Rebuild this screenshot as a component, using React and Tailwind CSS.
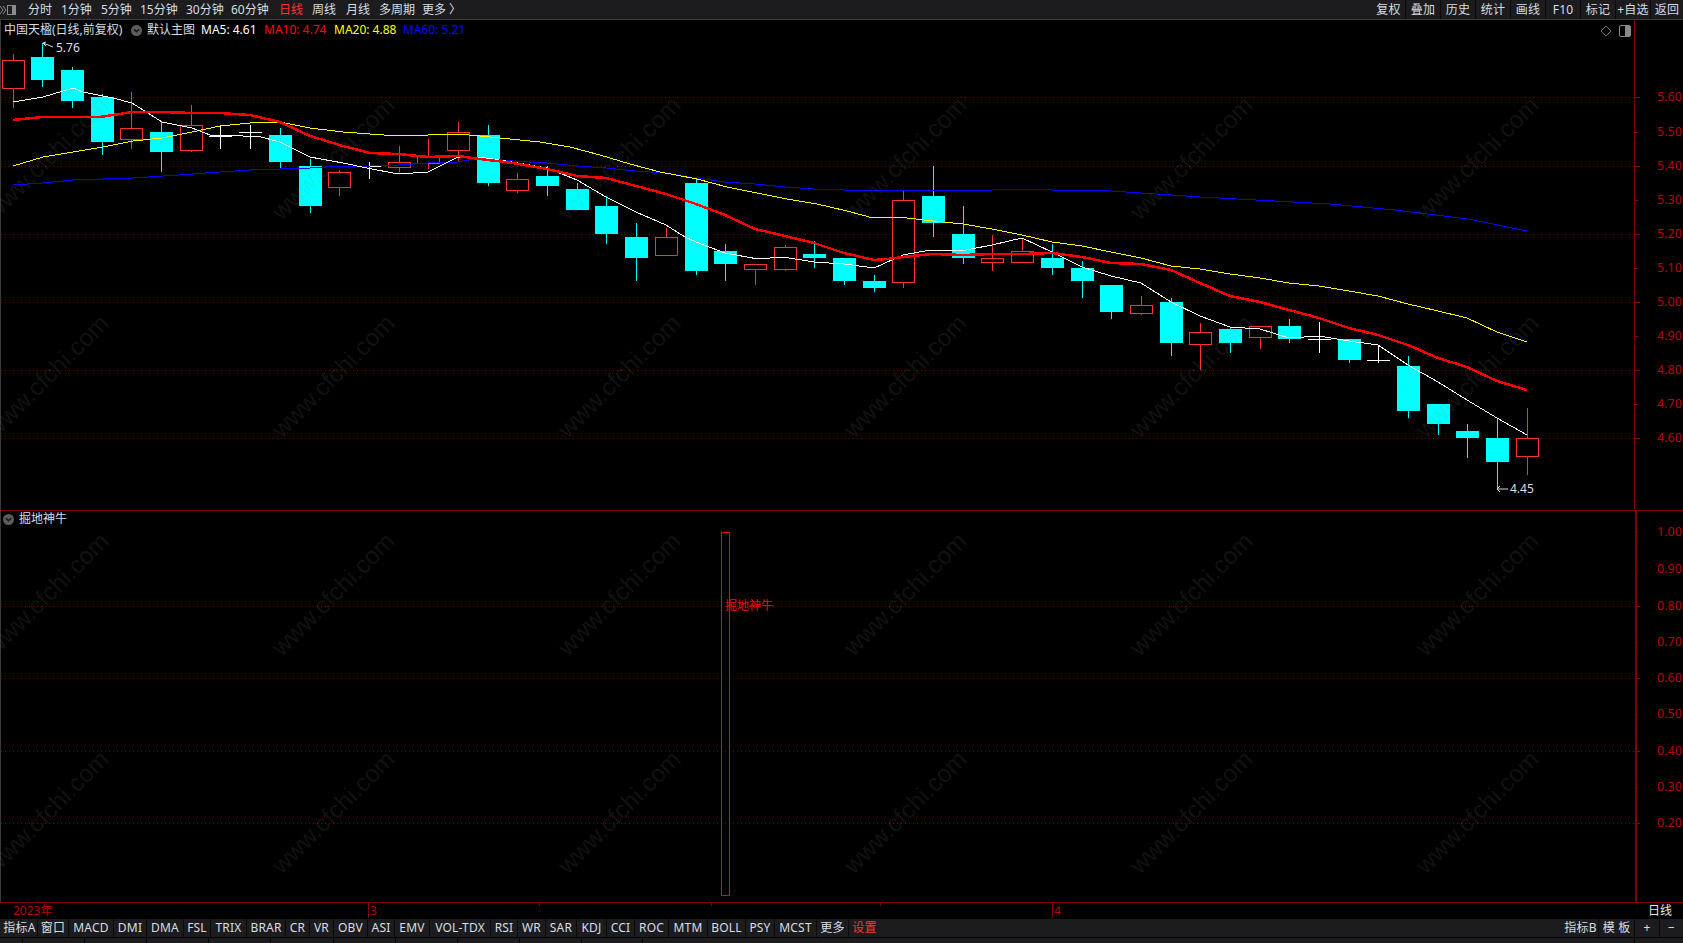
import React from "react";

const FONT = { fontFamily: '"Noto Sans", "Noto Sans CJK SC", sans-serif' };

// kind, wick column, wick top, body top, body bottom, wick bottom
const CANDLES = [
  ["r", 13, 54, 60, 88, 108], ["c", 42, 43, 57, 80, 87], ["c", 72, 67, 70, 101, 108], ["c", 102, 94, 97, 142, 155],
  ["r", 131, 92, 128, 139, 149], ["c", 161, 121, 132, 152, 172], ["r", 191, 105, 125, 150, 152], ["w", 220, 125, 136, 136, 149],
  ["w", 250, 125, 132, 132, 149], ["c", 280, 128, 135, 162, 169], ["c", 310, 159, 166, 206, 213], ["r", 339, 170, 172, 187, 196],
  ["w", 369, 162, 166, 166, 179], ["r", 399, 146, 162, 167, 172], ["r", 428, 139, 156, 163, 169], ["r", 458, 122, 132, 150, 161],
  ["c", 488, 125, 135, 183, 186], ["r", 517, 173, 179, 190, 193], ["c", 547, 166, 176, 186, 196], ["c", 577, 183, 189, 210, 210],
  ["c", 606, 196, 206, 234, 244], ["c", 636, 223, 237, 258, 281], ["r", 666, 228, 237, 255, 255], ["c", 696, 179, 183, 271, 275],
  ["c", 725, 244, 251, 264, 281], ["r", 755, 264, 264, 269, 285], ["r", 785, 245, 247, 269, 271], ["c", 814, 241, 254, 258, 268],
  ["c", 844, 258, 258, 281, 285], ["c", 874, 275, 281, 288, 292], ["r", 903, 190, 200, 282, 288], ["c", 933, 166, 196, 223, 237],
  ["c", 963, 206, 234, 258, 264], ["r", 992, 235, 258, 262, 271], ["r", 1022, 238, 251, 262, 262], ["c", 1052, 244, 258, 268, 275],
  ["c", 1082, 261, 268, 281, 298], ["c", 1111, 285, 285, 312, 319], ["r", 1141, 296, 305, 313, 315], ["c", 1171, 298, 302, 343, 356],
  ["r", 1200, 323, 332, 344, 370], ["c", 1230, 327, 329, 343, 353], ["r", 1260, 326, 326, 337, 349], ["c", 1289, 319, 326, 339, 343],
  ["w", 1319, 322, 339, 339, 353], ["c", 1349, 339, 339, 360, 363], ["w", 1378, 345, 360, 360, 363], ["c", 1408, 356, 366, 411, 418],
  ["c", 1438, 404, 404, 424, 435], ["c", 1467, 424, 431, 438, 458], ["c", 1497, 419, 438, 462, 490], ["r", 1527, 408, 438, 456, 475],
];

const MA5 = "13,102 43,97 73,88 83,92 113,98 132,103 162,122 192,128 210,135 243,136 257,136 280,142 310,157 343,163 367,168 398,174 428,172 458,157 480,157 512,162 547,168 577,180 606,197 636,212 666,225 685,237 696,242 725,253 758,259 783,257 814,262 844,264 874,268 903,255 930,250 966,250 992,245 1022,238 1052,252 1082,267 1111,276 1141,283 1171,302 1200,316 1230,327 1260,329 1289,338 1319,336 1349,341 1378,345 1408,365 1438,382 1467,400 1497,418 1527,435";
const MA10 = "13,120 43,117 73,117 100,117 132,112 162,112 192,113 220,113 250,115 280,122 310,136 343,146 370,153 398,154 428,157 458,156 480,159 513,163 547,169 577,176 606,178 636,186 666,194 696,204 725,215 755,229 785,236 814,243 844,253 874,260 887,259 903,257 933,254 963,255 992,254 1022,254 1052,253 1082,257 1111,263 1141,264 1171,270 1200,283 1230,296 1260,302 1289,310 1319,318 1349,328 1378,335 1408,345 1438,358 1467,367 1497,381 1527,390";
const MA20 = "13,166 43,157 73,152 103,147 133,141 162,138 192,132 220,126 250,123 280,122 310,128 343,132 370,134 398,136 428,135 458,134 480,136 510,139 540,142 570,147 600,155 630,164 660,172 697,179 727,187 757,193 787,199 817,204 847,211 873,218 898,217 933,221 963,224 992,229 1022,235 1052,242 1082,246 1111,252 1141,258 1171,266 1200,269 1230,274 1260,278 1289,283 1319,286 1349,291 1378,296 1408,304 1438,311 1467,318 1497,332 1527,342";
const MA60 = "13,185 43,183 73,180 103,179 133,178 163,176 193,174 220,172 250,170 280,169 310,168 343,166 370,166 398,165 428,163 458,162 480,158 513,161 547,163 577,166 606,168 636,171 666,173 696,178 725,182 755,184 785,187 814,189 844,190 874,191 903,190 933,190 963,190 992,190 1022,189 1052,190 1082,190 1111,191 1141,193 1171,195 1200,197 1256,200 1330,204 1395,210 1468,219 1527,231";

const UPPER = [["5.60", 97, 1], ["5.50", 132, 0], ["5.40", 166, 1], ["5.30", 200, 0], ["5.20", 234, 1], ["5.10", 268, 0], ["5.00", 302, 1], ["4.90", 336, 0], ["4.80", 370, 1], ["4.70", 404, 0], ["4.60", 438, 1]];
const LOWER = [["1.00", 532, 0], ["0.90", 569, 0], ["0.80", 606, 1], ["0.70", 642, 0], ["0.60", 678, 1], ["0.50", 714, 0], ["0.40", 751, 1], ["0.30", 787, 0], ["0.20", 823, 1]];

const WATERMARKS = [];
for (const y of [158, 376, 594, 812]) for (const x of [47, 333, 619, 905, 1191, 1477]) WATERMARKS.push([x, y]);

const TOP_LEFT = [["分时", 28], ["1分钟", 61], ["5分钟", 101], ["15分钟", 140], ["30分钟", 186], ["60分钟", 231], ["日线", 279, true], ["周线", 312], ["月线", 346], ["多周期", 379], ["更多 〉", 422]];
const TOP_RIGHT = [["复权", 33], ["叠加", 34], ["历史", 34], ["统计", 34], ["画线", 34], ["F10", 34], ["标记", 34], ["+自选", 34], ["返回", 32]];
const BOTTOM_LEFT = [["指标A", 35], ["窗口", 30], ["MACD", 44], ["DMI", 32], ["DMA", 36], ["FSL", 26], ["TRIX", 35], ["BRAR", 38], ["CR", 23], ["VR", 23], ["OBV", 33], ["ASI", 26], ["EMV", 34], ["VOL-TDX", 60], ["RSI", 26], ["WR", 27], ["SAR", 30], ["KDJ", 29], ["CCI", 27], ["ROC", 33], ["MTM", 38], ["BOLL", 37], ["PSY", 28], ["MCST", 41], ["更多", 31], ["设置", 31, true]];
const BOTTOM_RIGHT = [["指标B", 35], ["模 板", 35], ["+", 24], ["−", 23]];
const STRIP = [22, 61, 61, 61, 61, 62, 61, 61, 61, 61, 60, 991];

function Candle({ kind, col, wt, bt, bb, wb }) {
  const x = col + 0.5;
  if (kind === "w") {
    return (
      <g stroke="#ffffff" strokeWidth="1">
        <line x1={x} x2={x} y1={wt} y2={wb} />
        <line x1={col - 11} x2={col + 12} y1={bt + 0.5} y2={bt + 0.5} />
      </g>
    );
  }
  if (kind === "c") {
    return (
      <g>
        <line x1={x} x2={x} y1={wt} y2={wb} stroke="#00ffff" strokeWidth="1" />
        <rect x={col - 11} y={bt} width="23" height={bb - bt} fill="#00ffff" />
      </g>
    );
  }
  return (
    <g stroke="#ff3232" strokeWidth="1">
      <line x1={x} x2={x} y1={wt} y2={bt} />
      <line x1={x} x2={x} y1={bb} y2={wb} />
      <rect x={col - 10.5} y={bt + 0.5} width="22" height={bb - bt} fill="#000000" />
    </g>
  );
}

function AxisMarks({ rows }) {
  return rows.map(([label, y, major]) => (
    <g key={label}>
      {major ? <line x1="1" x2="1634" y1={y + 0.5} y2={y + 0.5} stroke="#8c0000" strokeWidth="1" strokeDasharray="1 3" /> : null}
      <line x1="1635" x2={major ? 1640 : 1638} y1={y + 0.5} y2={y + 0.5} stroke="#8c0000" strokeWidth="1" />
      <text x="1657" y={y + 4} fill="#b80000" fontSize="12.5">{label}</text>
    </g>
  ));
}

function Chevron() {
  return (
    <svg width="11" height="11" viewBox="0 0 11 11" className="shrink-0">
      <circle cx="5.5" cy="5.5" r="5.5" fill="#5c5c5c" />
      <path d="M3 4.2 L5.5 6.8 L8 4.2" fill="none" stroke="#111111" strokeWidth="1.4" />
    </svg>
  );
}

function ToolButton({ label, width, red }) {
  return (
    <div
      className={`flex shrink-0 items-center justify-center bg-[#1c1c1e] text-[12px] leading-none tracking-[0.2px] whitespace-nowrap ${red ? "text-[#ff3232]" : "text-[#d6dde4]"}`}
      style={{ width }}
    >
      {label}
    </div>
  );
}

export default function App() {
  return (
    <div className="flex h-[943px] w-[1683px] flex-col overflow-hidden bg-black" style={FONT}>
      {/* top toolbar */}
      <header className="flex h-[19px] shrink-0 items-stretch justify-between bg-[#1c1c1e]">
        <div className="relative flex-1">
          <svg width="16" height="12" viewBox="0 0 16 12" className="absolute top-[4px] left-0">
            <path d="M0 2 L3 6 L0 10 M3 2 L6 6 L3 10" fill="none" stroke="#8a8a8a" strokeWidth="1" />
            <rect x="7.5" y="1.5" width="8" height="9" fill="none" stroke="#8a8a8a" />
            <rect x="12" y="2" width="3" height="8" fill="#8a8a8a" />
          </svg>
          {TOP_LEFT.map(([label, left, red]) => (
            <span
              key={label}
              className={`absolute top-0 text-[12px] leading-[19px] whitespace-nowrap ${red ? "text-[#ff3232]" : "text-[#d6dde4]"}`}
              style={{ left }}
            >
              {label}
            </span>
          ))}
        </div>
        <div className="flex gap-[1px] bg-[#0a0a0a]">
          {TOP_RIGHT.map(([label, w]) => (
            <ToolButton key={label} label={label} width={w} />
          ))}
        </div>
      </header>
      <div className="h-[1px] shrink-0 bg-[#3c3c3c]" />

      {/* chart panes */}
      <main className="relative h-[899px] shrink-0">
        <section className="relative h-[491px] border-b border-[#800000]">
          <svg width="1683" height="490" viewBox="0 20 1683 490" className="block" style={FONT}>
            <g shapeRendering="crispEdges">
              <AxisMarks rows={UPPER} />
              {CANDLES.map(([kind, col, wt, bt, bb, wb]) => (
                <Candle key={col} kind={kind} col={col} wt={wt} bt={bt} bb={bb} wb={wb} />
              ))}
              <polyline points={MA60} fill="none" stroke="#0000ff" strokeWidth="1" />
              <polyline points={MA20} fill="none" stroke="#ffff00" strokeWidth="1" />
              <polyline points={MA5} fill="none" stroke="#ffffff" strokeWidth="1" />
              <polyline points={MA10} fill="none" stroke="#ff0000" strokeWidth="2.5" />
            </g>
            <path d="M43 43 L53 47 M43 43 L46 42 M43 43 L46 46" fill="none" stroke="#d8d8d8" strokeWidth="1" />
            <text x="56" y="52" fill="#d8dee4" fontSize="12">5.76</text>
            <path d="M1497 489 H1508 M1497 489 L1500 486 M1497 489 L1500 492" fill="none" stroke="#d8d8d8" strokeWidth="1" />
            <text x="1510" y="493" fill="#d8dee4" fontSize="12">4.45</text>
          </svg>

          {/* legend over the chart */}
          <div className="absolute top-[2px] left-[4px] flex h-[16px] items-center text-[12px] leading-none whitespace-nowrap">
            <span className="w-[127px] text-[#d6dde4]">中国天楹(日线,前复权)</span>
            <Chevron />
            <span className="ml-[5px] w-[54px] text-[#d6dde4]">默认主图</span>
            <span className="w-[63px] text-[#ffffff]">MA5: 4.61</span>
            <span className="w-[70px] text-[#ff0000]">MA10: 4.74</span>
            <span className="w-[69px] text-[#ffff00]">MA20: 4.88</span>
            <span className="text-[#0000ff]">MA60: 5.21</span>
          </div>
          <svg width="44" height="14" viewBox="0 0 44 14" className="absolute top-[4px] left-[1598px]">
            <path d="M8 2 L13 7 L8 12 L3 7 Z" fill="none" stroke="#707070" />
            <rect x="21.5" y="1.5" width="11" height="11" rx="1.5" fill="none" stroke="#8a8a8a" />
            <rect x="27" y="2" width="5" height="10" fill="#8a8a8a" />
          </svg>
          <div className="absolute top-0 left-[1634px] h-full w-[1px] bg-[#800000]" />
        </section>

        <section className="relative h-[391px]">
          <svg width="1683" height="391" viewBox="0 511 1683 391" className="block" style={FONT}>
            <g shapeRendering="crispEdges">
              <AxisMarks rows={LOWER} />
              <rect x="721.5" y="532.5" width="8" height="363" fill="none" stroke="#ff0000" strokeWidth="1" />
            </g>
            <text x="725" y="610" fill="#ff0000" fontSize="12">掘地神牛</text>
          </svg>
          <div className="absolute top-[0px] left-[3px] flex h-[16px] items-center gap-[5px] text-[12px] leading-none whitespace-nowrap text-[#d6dde4]">
            <Chevron />
            <span>掘地神牛</span>
          </div>
          <div className="absolute top-0 left-[1635px] h-full w-[2px] bg-[#800000]" />
        </section>

        <section className="relative h-[17px] border-t border-[#800000] text-[12px] leading-[15px]">
          <span className="absolute left-[13px] text-[#b80000]">2023年</span>
          <i className="absolute top-0 left-[368px] h-[15px] w-[1px] bg-[#800000]" />
          <span className="absolute left-[370px] text-[#b80000]">3</span>
          <i className="absolute top-0 left-[539px] h-[3px] w-[1px] bg-[#800000]" />
          <i className="absolute top-0 left-[711px] h-[3px] w-[1px] bg-[#800000]" />
          <i className="absolute top-0 left-[880px] h-[3px] w-[1px] bg-[#800000]" />
          <i className="absolute top-0 left-[1052px] h-[15px] w-[1px] bg-[#800000]" />
          <span className="absolute left-[1054px] text-[#b80000]">4</span>
          <span className="absolute left-[1648px] text-[#e8e8e8]">日线</span>
        </section>

        <div className="absolute top-0 left-0 h-[882px] w-[1px] bg-[#3a3a3a]" />

        {/* watermark laid over everything */}
        <svg width="1634" height="882" viewBox="0 20 1634 882" className="pointer-events-none absolute top-0 left-0">
          {WATERMARKS.map(([x, y]) => (
            <text
              key={`${x}-${y}`}
              x={x}
              y={y}
              textAnchor="middle"
              dominantBaseline="central"
              fontSize="24.5"
              fill="#8a8a8a"
              fillOpacity="0.14"
              transform={`rotate(-45 ${x} ${y})`}
              style={{ fontFamily: '"Liberation Sans", sans-serif' }}
            >
              www.cfchi.com
            </text>
          ))}
        </svg>
      </main>

      {/* bottom toolbar */}
      <footer className="flex h-[18px] shrink-0 items-stretch justify-between bg-[#1c1c1e] pl-[2px]">
        <div className="flex gap-[1px] bg-[#0a0a0a]">
          {BOTTOM_LEFT.map(([label, w, red]) => (
            <ToolButton key={label} label={label} width={w} red={red} />
          ))}
        </div>
        <div className="flex gap-[1px] bg-[#0a0a0a]">
          {BOTTOM_RIGHT.map(([label, w]) => (
            <ToolButton key={label} label={label} width={w} />
          ))}
        </div>
      </footer>
      <div className="h-[1px] shrink-0 bg-[#050505]" />
      <div className="flex flex-1 gap-[1px] bg-[#050505]">
        {STRIP.map((w, i) => (
          <div key={i} className="bg-[#1c1c1e]" style={{ width: w }} />
        ))}
        <div className="flex-1 bg-[#1c1c1e]" />
      </div>
    </div>
  );
}
